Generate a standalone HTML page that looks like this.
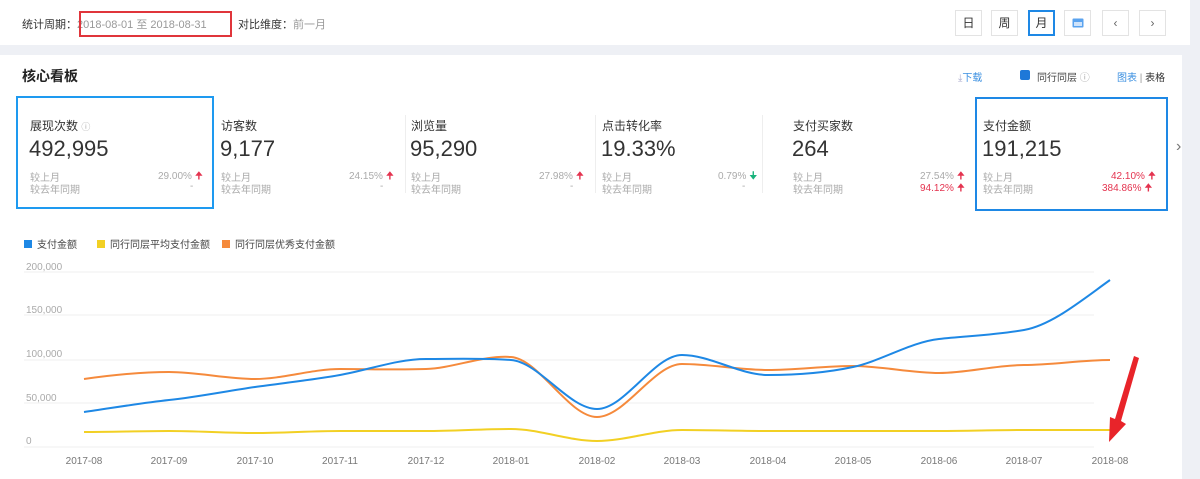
<!DOCTYPE html>
<html><head><meta charset="utf-8"><style>
*{margin:0;padding:0;box-sizing:border-box}
body{width:1200px;height:479px;background:#eef0f5;font-family:"Liberation Sans","Noto Sans CJK SC",sans-serif;position:relative;overflow:hidden;color:#333}
.top{position:absolute;left:0;top:0;width:1190px;height:45px;background:#fff}
.main{position:absolute;left:0;top:55px;width:1182px;height:424px;background:#fff}
.abs{position:absolute;white-space:nowrap}
.btn{position:absolute;top:10px;width:27px;height:26px;border:1px solid #e3e3e3;background:#fff;font-size:12px;text-align:center;line-height:24px;color:#333}
.card .t{font-size:12px;color:#333}
.num{font-size:22px;color:#333}
.sm{font-size:10px;color:#aaa}
.red{color:#e4334f}
</style></head><body>
<div class="top"></div>
<div class="main"></div>
<div class="abs" style="left:22px;top:16px;font-size:11px;color:#333">统计周期：<span style="color:#999">2018-08-01 至 2018-08-31</span></div>
<div class="abs" style="left:79px;top:11px;width:153px;height:26px;border:2px solid #e0353b"></div>
<div class="abs" style="left:238px;top:16px;font-size:11px;color:#333">对比维度：<span style="color:#999">前一月</span></div>
<div class="btn" style="left:955px">日</div>
<div class="btn" style="left:991px">周</div>
<div class="btn" style="left:1028px;border:2px solid #1e88e5;line-height:22px">月</div>
<div class="btn" style="left:1064px"><svg width="12" height="11" style="margin-top:6px"><rect x="0.5" y="1.5" width="11" height="9" fill="#5aa3ef" rx="1"/><rect x="2" y="5" width="8" height="4" fill="#cfe3fa"/></svg></div>
<div class="btn" style="left:1102px;color:#666">&lsaquo;</div>
<div class="btn" style="left:1139px;color:#666">&rsaquo;</div>

<div class="abs" style="left:22px;top:66px;font-size:14px;font-weight:bold;color:#222">核心看板</div>
<div class="abs" style="left:958px;top:69px;font-size:10px;color:#3a8fe0"><span style="color:#aac">⤓</span>下载</div>
<div class="abs" style="left:1020px;top:70px;width:10px;height:10px;background:#1e78d8;border-radius:2px"></div>
<div class="abs" style="left:1037px;top:69px;font-size:10px;color:#444">同行同层 <span style="color:#aaa">ⓘ</span></div>
<div class="abs" style="left:1117px;top:69px;font-size:10px;color:#3a8fe0">图表 <span style="color:#999">|</span> <span style="color:#333">表格</span></div>

<div class="abs" style="left:16px;top:96px;width:198px;height:113px;border:2px solid #1e9af0"></div>
<div class="abs" style="left:975px;top:97px;width:193px;height:114px;border:2px solid #1e88e5"></div>
<div class="abs" style="left:405px;top:115px;width:1px;height:78px;background:#eee"></div>
<div class="abs" style="left:595px;top:115px;width:1px;height:78px;background:#eee"></div>
<div class="abs" style="left:762px;top:115px;width:1px;height:78px;background:#eee"></div>
<div class="abs" style="left:1176px;top:138px;font-size:16px;color:#777">&rsaquo;</div>

<div class="card">
<div class="abs t" style="left:30px;top:117px;font-size:12px">展现次数 <span style="color:#aaa;font-size:9px">ⓘ</span></div>
<div class="abs num" style="left:29px;top:136px">492,995</div>
<div class="abs sm" style="left:30px;top:169px">较上月</div><div class="abs sm" style="left:30px;top:181px">较去年同期</div>
<div class="abs sm" style="left:158px;top:169px">29.00% <span class="red">🠉</span></div><div class="abs sm" style="left:190px;top:181px">-</div>

<div class="abs t" style="left:221px;top:117px">访客数</div>
<div class="abs num" style="left:220px;top:136px">9,177</div>
<div class="abs sm" style="left:221px;top:169px">较上月</div><div class="abs sm" style="left:221px;top:181px">较去年同期</div>
<div class="abs sm" style="left:349px;top:169px">24.15% <span class="red">🠉</span></div><div class="abs sm" style="left:380px;top:181px">-</div>

<div class="abs t" style="left:411px;top:117px">浏览量</div>
<div class="abs num" style="left:410px;top:136px">95,290</div>
<div class="abs sm" style="left:411px;top:169px">较上月</div><div class="abs sm" style="left:411px;top:181px">较去年同期</div>
<div class="abs sm" style="left:539px;top:169px">27.98% <span class="red">🠉</span></div><div class="abs sm" style="left:570px;top:181px">-</div>

<div class="abs t" style="left:602px;top:117px">点击转化率</div>
<div class="abs num" style="left:601px;top:136px">19.33%</div>
<div class="abs sm" style="left:602px;top:169px">较上月</div><div class="abs sm" style="left:602px;top:181px">较去年同期</div>
<div class="abs sm" style="left:718px;top:169px">0.79% <span style="color:#19b37c">🠋</span></div><div class="abs sm" style="left:742px;top:181px">-</div>

<div class="abs t" style="left:793px;top:117px">支付买家数</div>
<div class="abs num" style="left:792px;top:136px">264</div>
<div class="abs sm" style="left:793px;top:169px">较上月</div><div class="abs sm" style="left:793px;top:181px">较去年同期</div>
<div class="abs sm" style="left:920px;top:169px">27.54% <span class="red">🠉</span></div><div class="abs sm red" style="left:920px;top:181px">94.12% 🠉</div>

<div class="abs t" style="left:983px;top:117px">支付金额</div>
<div class="abs num" style="left:982px;top:136px">191,215</div>
<div class="abs sm" style="left:983px;top:169px">较上月</div><div class="abs sm" style="left:983px;top:181px">较去年同期</div>
<div class="abs sm red" style="left:1111px;top:169px">42.10% 🠉</div><div class="abs sm red" style="left:1102px;top:181px">384.86% 🠉</div>
</div>

<svg class="abs" style="left:0;top:225px" width="1182" height="254">
<g font-size="10" fill="#444" font-family="Liberation Sans,Noto Sans CJK SC,sans-serif">
<rect x="24" y="15" width="8" height="8" fill="#1e88e5"/><text x="37" y="23">支付金额</text>
<rect x="97" y="15" width="8" height="8" fill="#f2d024"/><text x="110" y="23">同行同层平均支付金额</text>
<rect x="222" y="15" width="8" height="8" fill="#f58a3c"/><text x="235" y="23">同行同层优秀支付金额</text>
</g>
<g stroke="#efefef" stroke-width="1">
<line x1="24" y1="47" x2="1094" y2="47"/><line x1="24" y1="90" x2="1094" y2="90"/><line x1="24" y1="135" x2="1094" y2="135"/><line x1="24" y1="178" x2="1094" y2="178"/><line x1="24" y1="222" x2="1094" y2="222"/>
</g>
<g font-size="10" fill="#aaa" font-family="Liberation Sans,sans-serif">
<text x="26" y="45">200,000</text><text x="26" y="88">150,000</text><text x="26" y="132">100,000</text><text x="26" y="176">50,000</text><text x="26" y="219">0</text>
</g>
<g font-size="10" fill="#777" font-family="Liberation Sans,sans-serif" text-anchor="middle">
<text x="84" y="239">2017-08</text><text x="169" y="239">2017-09</text><text x="255" y="239">2017-10</text><text x="340" y="239">2017-11</text><text x="426" y="239">2017-12</text><text x="511" y="239">2018-01</text><text x="597" y="239">2018-02</text><text x="682" y="239">2018-03</text><text x="768" y="239">2018-04</text><text x="853" y="239">2018-05</text><text x="939" y="239">2018-06</text><text x="1024" y="239">2018-07</text><text x="1110" y="239">2018-08</text>
</g>
<g fill="none" stroke-width="2">
<path stroke="#f2d024" d="M84 207 C112 207,141 206,169 206 S227 208,255 208 S312 206,340 206 S398 206,426 206 S483 204,511 204 S569 216,597 216 S654 205,682 205 S740 206,768 206 S825 206,853 206 S911 206,939 206 S996 205,1024 205 S1082 205,1110 205"/>
<path stroke="#f58a3c" d="M84 154 C112 150,141 147,169 147 S227 154,255 154 S312 144,340 144 S398 145,426 144 S483 130,511 132 S569 192,597 192 S654 139,682 139 S740 145,768 145 S825 141,853 141 S911 148,939 148 S996 140,1024 140 S1082 135,1110 135"/>
<path stroke="#1e88e5" d="M84 187 C112 183,141 178,169 175 S227 166,255 162 S312 155,340 150 S398 134,426 134 S483 133,511 135 S569 184,597 184 S654 130,682 130 S740 150,768 150 S825 148,853 142 S911 117,939 114 S996 110,1024 105 S1082 75,1110 55"/>
</g>
<polygon points="1139,133 1121,196 1126,199 1109,217 1110,192 1115,194 1134,131" fill="#e8242a"/>
</svg>
</body></html>
